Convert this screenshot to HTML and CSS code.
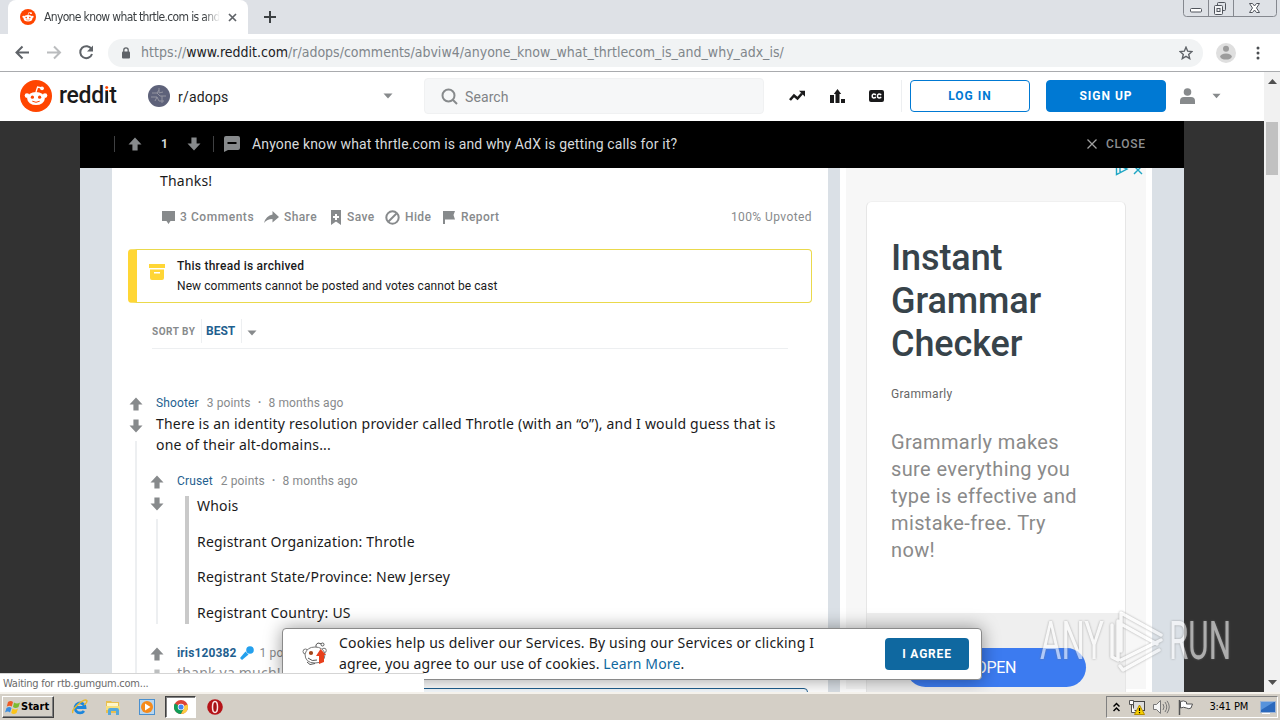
FILE: index.html
```html
<!DOCTYPE html>
<html lang="en">
<head>
<meta charset="utf-8">
<title>Anyone know what thrtle.com is and why AdX is getting calls for it?</title>
<link rel="stylesheet" href="styles.css">
</head>
<body>
<svg class="defs" width="0" height="0">
  <defs>
    <symbol id="up" viewBox="0 0 14 14"><path d="M7 .5 13.5 7.5H9.6V13.5H4.4V7.5H.5z"/></symbol>
    <symbol id="down" viewBox="0 0 14 14"><path d="M7 13.5 13.5 6.5H9.6V.5H4.4V6.5H.5z"/></symbol>
    <symbol id="caret" viewBox="0 0 10 6"><path d="M.5.5h9L5 5.5z"/></symbol>
    <symbol id="snoo" viewBox="0 0 32 32">
      <circle cx="16" cy="16" r="16" fill="#ff4500"/>
      <path d="M16 12l1.600-5 4.500 1" fill="none" stroke="#fff" stroke-width="1.300"/>
      <circle cx="22" cy="8.300" r="1.900" fill="#fff"/>
      <circle cx="7" cy="15.600" r="2.300" fill="#fff"/><circle cx="25" cy="15.600" r="2.300" fill="#fff"/>
      <ellipse cx="16" cy="18.500" rx="8.800" ry="6.600" fill="#fff"/>
      <circle cx="12.400" cy="17.200" r="1.600" fill="#ff4500"/><circle cx="19.600" cy="17.200" r="1.600" fill="#ff4500"/>
      <path d="M12.300 21.200q3.700 2.200 7.400 0" fill="none" stroke="#ff4500" stroke-width="1"/>
    </symbol>
  </defs>
</svg>

<div class="tabstrip">
  <div class="tab">
    <svg width="16" height="16"><use href="#snoo"/></svg>
    <span class="tab-title">Anyone know what thrtle.com is and</span>
    <svg class="tab-close" width="9" height="9" viewBox="0 0 9 9"><path d="M1 1l7 7M8 1l-7 7" stroke="#5f6368" stroke-width="1.700"/></svg>
  </div>
  <svg class="newtab" width="12" height="12" viewBox="0 0 12 12"><path d="M6 0v12M0 6h12" stroke="#3c4043" stroke-width="2"/></svg>
  <svg class="winbtns" width="94" height="17" viewBox="0 0 94 17" fill="none" stroke="#85888f">
    <path d="M.5 0v13.500q0 3 3 3h87q3 0 3-3V0M25.500 0v16M50.500 0v16"/>
    <g stroke="#50545c"><rect x="7.500" y="8.500" width="11" height="3.500" rx="1" fill="#fff"/>
    <rect x="34.500" y="2.500" width="8" height="8" rx="1"/><rect x="31.500" y="5.500" width="8" height="9" rx="1" fill="#f3f4f6"/><rect x="34" y="8.500" width="3" height="3"/>
    <path d="M66.500 3.500h3l2 2.500 2-2.500h3L73.500 8l3 4.500h-3l-2-2.500-2 2.500h-3l3-4.500z" fill="#fff"/></g>
  </svg>
</div>

<div class="toolbar">
  <svg width="100" height="37" viewBox="0 0 100 37" fill="none" stroke-width="2">
    <path d="M29 18.500H16.500M22.500 12.500l-6 6 6 6" stroke="#5f6368"/>
    <path d="M47 18.500h12.500M54 12.500l6 6-6 6" stroke="#babcbe"/>
    <path d="M91.500 15.200A6 6 0 1 0 92 20" stroke="#5f6368"/><path d="M93 11.500v6h-6z" fill="#5f6368"/>
  </svg>
  <div class="omnibox">
    <svg width="8" height="12" viewBox="0 0 8 12"><rect y="4.500" width="8" height="7" rx="1" fill="#5f6368"/><path d="M1.800 5V3a2.200 2.200 0 0 1 4.400 0v2" fill="none" stroke="#5f6368" stroke-width="1.300"/></svg>
    <span class="url">https://<b>www.reddit.com</b><i>/r/adops/comments/abviw4/anyone_know_what_thrtlecom_is_and_why_adx_is/</i></span>
    <svg class="star" width="14" height="14" viewBox="0 0 14 14"><path d="M7 1.200l1.700 4 4.200.4-3.200 2.800 1 4.200L7 10.300l-3.700 2.300 1-4.200L1.100 5.600l4.200-.4z" fill="none" stroke="#5f6368" stroke-width="1.400"/></svg>
  </div>
  <svg class="avatar" width="20" height="20" viewBox="0 0 20 20"><circle cx="10" cy="10" r="10" fill="#dfdfdf"/><circle cx="10" cy="5.800" r="3" fill="#9c9c9c"/><ellipse cx="10" cy="13.600" rx="5.800" ry="3" fill="#9c9c9c"/></svg>
  <svg class="menu" width="4" height="14" viewBox="0 0 4 14" fill="#4b4e52"><circle cx="2" cy="2" r="1.500"/><circle cx="2" cy="7" r="1.500"/><circle cx="2" cy="12" r="1.500"/></svg>
</div>

<div class="viewport">
  <div class="page">
    <header class="site">
      <svg width="32" height="32"><use href="#snoo"/></svg>
      <span class="wordmark">redd<span class="wm-i">i</span>t</span>
      <svg class="sub-icon" width="22" height="22" viewBox="0 0 22 22"><circle cx="11" cy="11" r="11" fill="#5e627a"/><path d="M4 8h5l2-3M9 8l3 3h6M3 12h6l2 4h5M11 3v5l4-1M7 16l2-4M14 11v7" stroke="#9394a0" fill="none"/></svg>
      <span class="sub-name">r/adops</span>
      <svg class="caret sub-caret" width="10" height="6"><use href="#caret"/></svg>
      <div class="search">
        <svg width="17" height="17" viewBox="0 0 17 17" fill="none" stroke="#878a8c" stroke-width="2"><circle cx="7.500" cy="7.500" r="6"/><path d="M12 12l4 4"/></svg>
        <span>Search</span>
      </div>
      <svg class="i-trend" width="16" height="12" viewBox="0 0 16 12"><path d="M1 10l4-4.500 3.500 3L13 3.500" fill="none" stroke="#1a1a1b" stroke-width="2.600"/><path d="M10 .8h6v6z" fill="#1a1a1b"/></svg>
      <svg class="i-chart" width="15" height="14" viewBox="0 0 15 14" fill="#1a1a1b"><path d="M0 6h4v8H0zM5.500 5H3.800L7.500 0l3.700 5H9.500v9h-4zM11 10h4v4h-4z"/></svg>
      <svg class="i-cc" width="15" height="12" viewBox="0 0 15 12"><rect width="15" height="12" rx="2" fill="#1a1a1b"/><path d="M7 4.700Q3.200 3 3.200 6T7 7.300M12.300 4.700Q8.500 3 8.500 6t3.800 1.300" fill="none" stroke="#fff" stroke-width="1.500"/></svg>
      <span class="rule"></span>
      <span class="btn login">LOG IN</span>
      <span class="btn signup">SIGN UP</span>
      <svg class="user" width="15" height="16" viewBox="0 0 15 16" fill="#878a8c"><circle cx="7.500" cy="4" r="3.800"/><path d="M0 16v-3q0-4 4-4h7q4 0 4 4v3z"/></svg>
      <svg class="caret" width="9" height="6"><use href="#caret"/></svg>
    </header>
    <div class="backdrop">
      <div class="lightbox">
        <div class="titlebar">
          <span class="tick"></span>
          <svg class="tb-up" width="14" height="14"><use href="#up"/></svg>
          <b class="score">1</b>
          <svg width="14" height="14"><use href="#down"/></svg>
          <span class="tick tick2"></span>
          <svg class="bubble" width="16" height="16" viewBox="0 0 16 16"><path d="M2 0h12q2 0 2 2v10q0 2-2 2H4l-4 2V2q0-2 2-2z" fill="#878a8c"/><path d="M3.500 7h9" stroke="#000" stroke-width="2"/></svg>
          <span class="post-title">Anyone know what thrtle.com is and why AdX is getting calls for it?</span>
          <svg class="x" width="10" height="10" viewBox="0 0 10 10"><path d="M.5.5l9 9M9.500.5l-9 9" stroke="#a0a0a0" stroke-width="1.300"/></svg>
          <span class="close">CLOSE</span>
        </div>
        <div class="columns">
          <main class="post">
            <p class="body thanks">Thanks!</p>
            <div class="actions">
              <svg width="13" height="13" viewBox="0 0 13 13"><path d="M0 0h13v10H8.500L6.500 13l-2-3H0z"/></svg><span class="a1">3 Comments</span>
              <svg width="15" height="12" viewBox="0 0 15 12"><path d="M8.500 0L15 6l-6.500 5.500V8Q3 8 0 12 2 4.500 8.500 3.500z"/></svg><span class="a2">Share</span>
              <svg width="12" height="15" viewBox="0 0 12 15"><path fill-rule="evenodd" d="M1 0h10v15l-5-3.500L1 15zM5 4v2H3v2h2v2h2V8h2V6H7V4z"/></svg><span class="a3">Save</span>
              <svg width="15" height="15" viewBox="0 0 15 15" fill="none" stroke="#878a8c" stroke-width="2"><circle cx="7.500" cy="7.500" r="6.200"/><path d="M11.500 3.500l-8 8"/></svg><span class="a4">Hide</span>
              <svg width="13" height="13" viewBox="0 0 13 13"><path d="M0 0h12l-1.500 4L12 8.500H2V13H0z"/></svg><span class="a5">Report</span>
              <span class="upvoted">100% Upvoted</span>
            </div>
            <div class="archived">
              <svg width="16" height="16" viewBox="0 0 16 16" fill="#ffd635"><path d="M0 0h16v4H0z"/><path fill-rule="evenodd" d="M1 5.500h14V14q0 2-2 2H3q-2 0-2-2zM5 8v1.500h6V8z"/></svg>
              <div><b>This thread is archived</b><span>New comments cannot be posted and votes cannot be cast</span></div>
            </div>
            <div class="sort"><span class="sort-by">SORT BY</span><b>BEST</b><svg class="caret" width="10" height="6"><use href="#caret"/></svg></div>
            <div class="comment">
              <div class="votes"><svg width="14" height="14"><use href="#up"/></svg><svg width="14" height="14"><use href="#down"/></svg><i></i></div>
              <div class="thread">
                <div class="meta m1"><a>Shooter</a><span>3 points</span><em>·</em><span>8 months ago</span></div>
                <p class="body reply">There is an identity resolution provider called Throtle (with an “o”), and I would guess that is<br>one of their alt-domains...</p>
                <div class="comment child">
                  <div class="votes"><svg width="14" height="14"><use href="#up"/></svg><svg width="14" height="14"><use href="#down"/></svg><i></i></div>
                  <div class="thread">
                    <div class="meta m2"><a>Cruset</a><span>2 points</span><em>·</em><span>8 months ago</span></div>
                    <blockquote class="body"><p>Whois</p><p>Registrant Organization: Throtle</p><p>Registrant State/Province: New Jersey</p><p>Registrant Country: US</p></blockquote>
                  </div>
                </div>
                <div class="comment child last">
                  <div class="votes"><svg width="14" height="14"><use href="#up"/></svg><svg class="faded" width="14" height="14"><use href="#down"/></svg></div>
                  <div class="thread">
                    <div class="meta m3"><a><b>iris120382</b></a><svg width="14" height="14" viewBox="0 0 14 14" fill="#24a0ed"><circle cx="10" cy="4" r="3.800"/><path d="M5.500 5.500l3 3L2 14 0 12z"/></svg><span>1 point</span></div>
                    <p class="body faint">thank ya much!</p>
                  </div>
                </div>
              </div>
            </div>
          </main>
          <aside>
            <div class="ad">
              <svg class="adchoices" width="28" height="12" viewBox="0 0 28 12" fill="none" stroke="#1fa6c4" stroke-width="1.400"><path d="M1.500 0v9.500L12 4 4 .5M5 3v4"/><path d="M19 1l8 8M27 1l-8 8"/></svg>
              <div class="ad-card">
                <h2>Instant<br>Grammar<br>Checker</h2>
                <small>Grammarly</small>
                <p>Grammarly makes<br>sure everything you<br>type is effective and<br>mistake-free. Try<br>now!</p>
                <div class="ad-foot"><span>OPEN</span></div>
              </div>
            </div>
          </aside>
        </div>
      </div>
    </div>
  </div>
  <div class="scroll"><svg class="caret" width="9" height="5" viewBox="0 0 9 5"><path d="M0 5h9L4.500 0z"/></svg><span class="thumb"></span><svg class="caret end" width="9" height="5" viewBox="0 0 9 5"><path d="M0 0h9L4.500 5z"/></svg></div>
  <div class="editor-edge"></div>
  <div class="cookies">
    <svg width="26" height="26" viewBox="0 0 26 26"><path d="M14 7q-1-4 2-5l4 1" fill="none" stroke="#555"/><circle cx="20.500" cy="3.500" r="1.500" fill="#fff" stroke="#555"/><circle cx="3.500" cy="10.500" r="2.500" fill="#fff" stroke="#777"/><circle cx="22" cy="9.500" r="2.300" fill="#fff" stroke="#777"/><path d="M3 13q2-7 10-7t10 7q0 9-10 9T3 13z" fill="#fff" stroke="#777"/><path d="M18.500 8l5.500 6h-2v7l-5 2v-8h-3z" fill="#e8401c"/><circle cx="9" cy="12" r="2.100" fill="#a04418"/><path d="M6 17q4 4 9 2M5 21l3 2.500 5-1" fill="none" stroke="#555"/></svg>
    <p>Cookies help us deliver our Services. By using our Services or clicking I<br><span class="line2">agree, you agree to our use of cookies. <a>Learn More</a>.</span></p>
    <span class="agree">I AGREE</span>
  </div>
  <div class="status">Waiting for rtb.gumgum.com...</div>
  <svg class="watermark" width="194" height="66" viewBox="0 0 194 66">
    <text x="1" y="50" textLength="64" lengthAdjust="spacingAndGlyphs">ANY</text>
    <text x="130" y="50" textLength="62" lengthAdjust="spacingAndGlyphs">RUN</text>
    <path d="M73 16v32l6 3V12M82 42V4l40 22M82 15l36 20M82 51l40-20M81 57l3 4 36-20"/>
  </svg>
</div>

<div class="taskbar">
  <div class="start"><svg width="16" height="15" viewBox="0 0 16 15"><path d="M3 2q3-2 5 0L6.800 6.500q-2-1.500-5 0z" fill="#ee5a24"/><path d="M9 2.500q3 2 6 0l-1.500 4.500q-3 2-5.500 0z" fill="#7cbb2e"/><path d="M1.500 8q3-2 5 0L5 12.500q-2-2-5 0z" fill="#3a8de0"/><path d="M7.500 8.500q3 2 5.500 0l-1.500 4.500q-3 2-5.300 0z" fill="#fcc419"/></svg><b>Start</b></div>
  <svg class="t-ie" width="16" height="16" viewBox="0 0 16 16" fill="none"><path d="M3 8.500h10A5 5 0 1 0 12 12" stroke="#1c86dc" stroke-width="2.800"/><path d="M1 14Q-1 12 6 5.500T15 2q0 2-3 4" stroke="#e9b92c" stroke-width="1.500"/></svg>
  <svg class="t-folder" width="16" height="16" viewBox="0 0 16 16"><path d="M1 2h5l1 1h7v11H1z" fill="#e9c04f"/><path d="M2 4h11v3H2z" fill="#fff6c8"/><path d="M1 7h14v4H1z" fill="#f7e07c"/><path d="M3 16v-5q0-2 2-2h7q2 0 2 2v5h-3v-4H6v4z" fill="#55a9dc"/></svg>
  <svg class="t-wmp" width="16" height="16" viewBox="0 0 16 16"><rect x=".5" y=".5" width="15" height="15" fill="#b8d6ef" stroke="#4a90cf"/><circle cx="8" cy="8" r="6" fill="#f58a1b"/><path d="M6 4.500L11.500 8 6 11.500z" fill="#fff"/></svg>
  <div class="task-active"><svg width="14" height="14" viewBox="0 0 16 16"><circle cx="8" cy="8" r="8" fill="#dc4437"/><path d="M8 8L1 4A8 8 0 0 0 8 16l3.500-6.500z" fill="#109d58"/><path d="M8 8l7.400-3A8 8 0 0 1 8 16l3.500-6.500z" fill="#fdcd41"/><circle cx="8" cy="8" r="3.700" fill="#fff"/><circle cx="8" cy="8" r="2.900" fill="#4285f4"/></svg></div>
  <svg class="t-opera" width="16" height="16" viewBox="0 0 16 16"><circle cx="8" cy="8" r="7.800" fill="#b51318"/><ellipse cx="8" cy="8" rx="2.500" ry="5.500" fill="#a50f14" stroke="#fbe4e4" stroke-width="1.500"/></svg>
  <div class="tray">
    <svg class="chev" width="7" height="10" viewBox="0 0 7 10"><path d="M.5 4.500l3-3 3 3M.5 9l3-3 3 3" fill="none" stroke="#000" stroke-width="1.500"/></svg>
    <svg class="net" width="17" height="16" viewBox="0 0 17 16"><rect x="4.500" y="2.500" width="11" height="9" fill="#ddd" stroke="#444"/><path d="M.5 1.500h4v4h-4zM2.500 5.500v8h4" fill="#fff" stroke="#555"/><path d="M10.500 6l5 9.500h-10z" fill="#f6cf00" stroke="#b38c00"/><path d="M10.500 9v3M10.500 13v1.200" stroke="#000" stroke-width="1.200"/></svg>
    <svg class="vol" width="17" height="14" viewBox="0 0 17 14" fill="#f6f6f6" stroke="#777"><path d="M.5 4.500h3l4-4v13l-4-4h-3z"/><path d="M10 4q2 3 0 6M12 2q3.500 5 0 10M14 .8q4.500 6 0 12.400" fill="none"/></svg>
    <svg class="flag" width="16" height="15" viewBox="0 0 16 15"><path d="M2.500 1.500q3-1.500 6 .5v2h6l-1.500 4q-2 1.500-4.500 0-3-1.500-6 0z" fill="#fff" stroke="#555"/><path d="M1.500 0v15" stroke="#555" stroke-width="1.500"/></svg>
    <span class="clock">3:41 PM</span>
    <svg width="16" height="13" viewBox="0 0 16 13"><rect x=".5" y=".5" width="15" height="11" fill="#2b69bd" stroke="#9fb6d6"/><path d="M1 1h13L1 9z" fill="#5793dc"/><path d="M2 12.500h8" stroke="#fff"/></svg>
  </div>
</div>
</body>
</html>
```

FILE: styles.css
```css
* { box-sizing: border-box; }
body { margin: 0; width: 1280px; height: 720px; overflow: hidden; display: flex; flex-direction: column; font-family: Roboto, "Liberation Sans", sans-serif; background: #fff; white-space: nowrap; }
p, h2, blockquote { margin: 0; }
svg { flex: none; display: block; }
span, b { flex: none; }
.defs { position: absolute; }
.caret { fill: #878a8c; }

/* browser frame */
.tabstrip { height: 34px; flex: none; background: #dee1e6; display: flex; align-items: flex-start; padding-left: 8px; }
.tab { width: 240px; height: 34px; background: #fff; border-radius: 8px 8px 0 0; display: flex; align-items: center; padding: 0 12px; }
.tab-title { width: 176px; margin-left: 8px; overflow: hidden; font: 12px/16px "DejaVu Sans Condensed", "DejaVu Sans", sans-serif; font-stretch: condensed; letter-spacing: -.65px; color: #3c4043; -webkit-mask-image: linear-gradient(90deg, #000 160px, transparent); mask-image: linear-gradient(90deg, #000 160px, transparent); }
.tab-close { margin-left: 8px; }
.newtab { margin: 11px 0 0 16px; }
.winbtns { margin-left: auto; margin-right: 3px; }
.toolbar { height: 37px; flex: none; display: flex; align-items: center; }
.omnibox { width: 1095px; height: 28px; margin-left: 8px; background: #f1f3f4; border-radius: 14px; display: flex; align-items: center; padding: 0 10px 0 14px; }
.url { margin: -2px 0 0 11px; font: 14px/20px "DejaVu Sans Condensed", "DejaVu Sans", sans-serif; font-stretch: condensed; font-weight: 200; letter-spacing: .01px; color: #80868b; }
.url b { font-weight: 400; color: #202124; }
.url i { font-style: normal; }
.star { margin-left: auto; }
.avatar { margin-left: 13px; }
.menu { margin-left: 20px; }

/* page */
.viewport { position: relative; height: 621px; flex: none; border-top: 1px solid #a9abae; display: flex; overflow: hidden; }
.page { width: 1264px; height: 620px; }
.scroll { width: 16px; background: #f1f1f1; display: flex; flex-direction: column; align-items: center; padding: 7px 0; }
.scroll .caret { fill: #505050; }
.scroll .end { margin-top: auto; }
.thumb { width: 12px; height: 53px; background: #c1c1c1; margin-top: 38px; }
.site { height: 49px; background: #fff; display: flex; align-items: center; padding: 0 0 1px 20px; }
.wordmark { margin-left: 7px; width: 60px; font: 500 23px/32px Roboto, sans-serif; letter-spacing: -.35px; color: #1a1a1b; }
.wm-i { background: linear-gradient(#ff4500 9px, #1a1a1b 9px); background-clip: text; -webkit-background-clip: text; color: transparent; }
.sub-icon { margin-left: 29px; }
.sub-name { margin-left: 8px; width: 51px; padding-top: 2px; font-size: 14px; letter-spacing: .2px; color: #1c1c1c; }
.sub-caret { margin-left: 154px; }
.search { width: 340px; height: 36px; margin-left: 31px; border: 1px solid #f0f1f2; border-radius: 4px; background: #f6f7f8; display: flex; align-items: center; padding-left: 16px; font-size: 14px; letter-spacing: .1px; color: #808386; }
.search span { margin: 1px 0 0 7px; }
.i-trend { margin-left: 25px; }
.i-chart { margin-left: 25px; }
.i-cc { margin-left: 24px; }
.rule { width: 1px; height: 32px; margin-left: 17px; background: #edeff1; }
.btn { width: 120px; height: 32px; border: 1px solid #0079d3; border-radius: 4px; text-align: center; font: 700 12px/30px Roboto, sans-serif; letter-spacing: 1px; }
.login { margin-left: 8px; color: #0079d3; }
.signup { margin-left: 16px; background: #0079d3; color: #fff; }
.user { margin: 0 17px 0 14px; }
.backdrop { height: 571px; background: #323232; padding-left: 80px; }
.lightbox { width: 1104px; height: 571px; background: #dae0e6; display: flex; flex-direction: column; }
.titlebar { height: 47px; flex: none; background: #000; display: flex; align-items: center; padding: 0 0 1px 34px; color: #d7dadc; }
.titlebar svg { fill: #878a8c; }
.tick { width: 1px; height: 16px; background: #3f4042; }
.tb-up { margin-left: 13px; }
.score { width: 45px; text-align: center; font-size: 12px; }
.tick2 { margin-left: 12px; }
.bubble { margin-left: 10px; }
.post-title { margin-left: 12px; width: 425px; font: 14px/20px Roboto, sans-serif; letter-spacing: .14px; }
.x { margin-left: auto; }
.close { width: 40px; margin: 0 38px 0 9px; font: 500 12px/16px Roboto, sans-serif; letter-spacing: .7px; color: #8d8f91; }
.columns { height: 524px; padding-left: 32px; display: flex; gap: 12px; overflow: hidden; }
.post { width: 716px; height: 524px; background: #fff; padding: 2px 16px 0; }
.body { font: 14px/21px "Noto Sans", sans-serif; letter-spacing: .205px; color: #1a1a1b; }
.thanks { padding-left: 32px; }
.actions { height: 24px; margin-top: 14px; padding-left: 34px; display: flex; align-items: center; font: 500 12px/16px Roboto, sans-serif; letter-spacing: .4px; color: #878a8c; fill: #878a8c; }
.actions span { margin-left: 5px; }
.a1 { width: 84px; letter-spacing: .55px; }
.a2 { width: 46px; }
.a3 { width: 38px; }
.a4 { width: 38px; }
.actions .upvoted { margin-left: auto; font-weight: 400; letter-spacing: .42px; }
.archived { height: 54px; margin-top: 20px; border: 1px solid #ead94c; border-left: 9px solid #ffd635; border-radius: 4px; padding: 6px 0 0 12px; display: flex; color: #1a1a1b; }
.archived svg { margin-top: 8px; }
.archived div { margin-left: 12px; display: flex; flex-direction: column; }
.archived b, .archived span { font: 500 12px/20px Roboto, sans-serif; letter-spacing: .25px; }
.archived span { font-weight: 400; letter-spacing: .07px; }
.sort { height: 30px; margin: 16px 24px 0; border-bottom: 1px solid #edeff1; display: flex; align-items: flex-start; line-height: 24px; color: #878a8c; }
.sort-by { width: 49px; font-size: 10px; font-weight: 700; letter-spacing: .5px; line-height: 25px; }
.sort b { width: 41px; border: solid #edeff1; border-width: 0 1px; padding-left: 4px; font-size: 12px; color: #1f5f8f; }
.sort .caret { margin: 11px 0 0 5px; }
.comment { display: flex; margin-top: 46px; }
.votes { width: 16px; margin-right: 12px; display: flex; flex-direction: column; align-items: center; gap: 8px; padding-top: 2px; fill: #878a8c; }
.votes i { flex: 1; width: 2px; background: #edeff1; }
.child { margin: 18px 0 0 -7px; }
.faded { opacity: .55; }
.last { margin-top: 21px; }
.meta { height: 16px; display: flex; align-items: center; font: 12px/16px Roboto, sans-serif; letter-spacing: .13px; color: #878a8c; }
.meta a { color: #1f5f8f; margin-right: 8px; }
.meta em { margin: 0 7px; font-style: normal; font-weight: 700; }
.m3 a { margin-right: 3px; }
.m3 svg { margin-right: 6px; }
.reply { margin-top: 2px; }
blockquote { margin: 7px 0 0 8px; border-left: 4px solid #c9c9c9; padding-left: 8px; display: flex; flex-direction: column; gap: 14.67px; }
blockquote p { position: relative; top: -1px; }
.faint { color: #8b8d8f; margin-top: 1px; }
aside { width: 312px; height: 524px; background: #fff; padding: 0 6px; }
.ad { height: 524px; background: #f7f7f7; padding: 0 20px; }
.adchoices { margin-left: 249px; margin-top: -3px; }
.ad-card { width: 260px; height: 500px; margin-top: 24px; background: #fff; border: 1px solid #e6e6e6; border-top-color: #f0f0f0; border-radius: 6px; display: flex; flex-direction: column; padding-left: 24px; }
.ad-card h2 { margin-top: 35px; font: 500 36px/43px Roboto, sans-serif; letter-spacing: -.1px; color: #37434a; }
.ad-card small { margin-top: 20px; font-size: 12px; line-height: 16px; letter-spacing: .3px; color: #666; }
.ad-card p { margin-top: 27px; font-size: 20px; line-height: 27px; letter-spacing: .38px; color: #8a8a8a; }
.ad-foot { margin: 49px 0 0 -24px; width: 258px; flex: none; height: 90px; background: #efefef; padding: 35px 0 0 39px; }
.ad-foot span { display: block; width: 180px; height: 39px; border-radius: 20px; background: #3c7bf0; color: #fff; font-size: 16px; letter-spacing: -.3px; line-height: 39px; text-align: center; }

/* layers over the page */
.editor-edge { position: absolute; left: 400px; top: 616px; width: 408px; height: 20px; border: 1px solid #1f5f8f; border-radius: 4px; background: #f4f9fd; }
.cookies { position: absolute; left: 282px; top: 556px; width: 700px; height: 52px; background: #fff; border: 1px solid #8a8a8a; border-radius: 4px; box-shadow: 0 0 18px rgba(0,0,0,.4); display: flex; align-items: center; padding-left: 19px; }
.cookies p { width: 475px; margin: -2px 0 0 11px; font: 14px/21px "Noto Sans", sans-serif; letter-spacing: .2px; color: #1a1a1b; }
.cookies .line2 { letter-spacing: .14px; }
.cookies a { color: #0f68a0; }
.agree { width: 84px; height: 32px; margin-left: 71px; border-radius: 4px; background: #0f68a0; color: #fff; text-align: center; font: 700 12px/32px Roboto, sans-serif; letter-spacing: .8px; }
.status { position: absolute; left: 0; top: 601px; width: 424px; height: 19px; border-top: 1px solid #d5d5d5; background: #fff; padding-left: 3px; font: 11px/19px "DejaVu Sans Condensed", "DejaVu Sans", sans-serif; font-stretch: condensed; letter-spacing: -.24px; color: #6a6a6a; }
.watermark { position: absolute; left: 1039px; top: 537px; overflow: visible; opacity: .6; filter: drop-shadow(0 0 1px #777); }
.watermark text { font: 400 53px Roboto, sans-serif; fill: #fff; }
.watermark path { fill: none; stroke: #fff; stroke-width: 3.500; stroke-linecap: round; stroke-linejoin: round; }

/* desktop taskbar */
.taskbar { height: 28px; flex: none; background: #d4cfc6; border-top: 2px solid #f5f2ec; display: flex; align-items: center; padding-left: 2px; }
.start { width: 52px; height: 22px; border: 1px solid; border-color: #fff #404040 #404040 #fff; box-shadow: inset -1px -1px #808080; display: flex; align-items: center; padding-left: 2px; }
.start b { margin-left: 0; font: 700 11px/16px "DejaVu Sans Condensed", "DejaVu Sans", sans-serif; font-stretch: condensed; color: #000; }
.t-ie { margin-left: 18px; }
.t-folder { margin-left: 17px; }
.t-wmp { margin-left: 18px; }
.task-active { width: 31px; height: 22px; margin-left: 10px; border: 1px solid; border-color: #404040 #fff #fff #404040; box-shadow: inset 1px 1px #808080; background: #fff; display: flex; align-items: center; justify-content: center; }
.t-opera { margin-left: 11px; }
.tray { width: 172px; height: 22px; margin: 0 2px 0 auto; border: 1px solid; border-color: #808080 #fff #fff #808080; display: flex; align-items: center; padding: 0 1px 0 6px; }
.net { margin-left: 9px; }
.vol { margin-left: 7px; }
.flag { margin-left: 8px; }
.clock { margin: 0 12px 0 auto; font: 11px/16px "DejaVu Sans Condensed", "DejaVu Sans", sans-serif; font-stretch: condensed; letter-spacing: -.2px; color: #000; }
```
